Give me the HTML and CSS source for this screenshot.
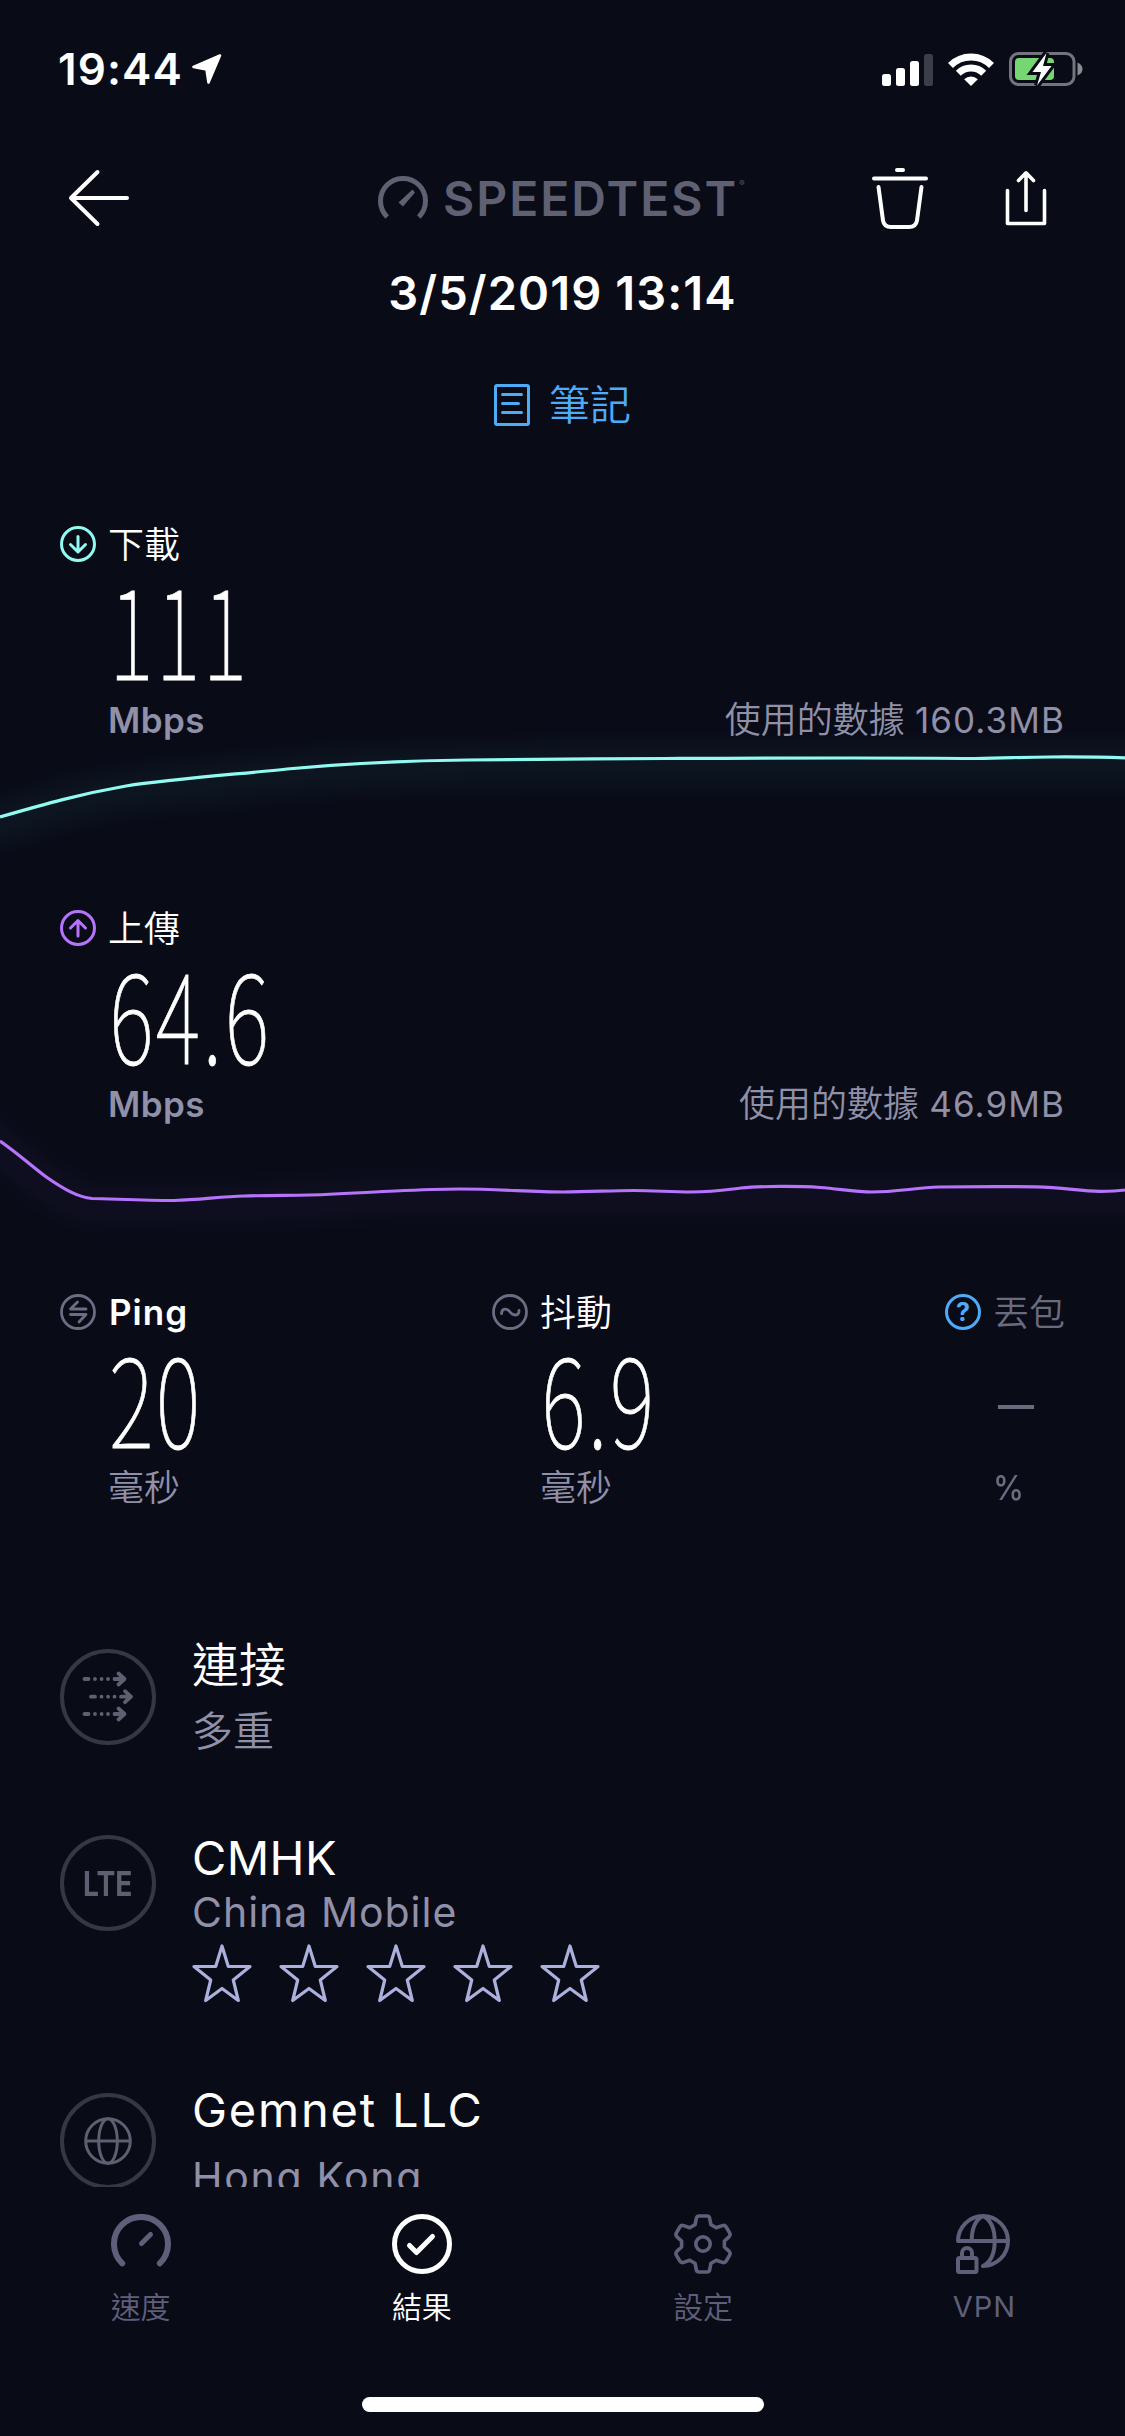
FILE: index.html
```html
<!DOCTYPE html>
<html lang="zh-Hant">
<head>
<meta charset="utf-8">
<title>Speedtest</title>
<link rel="stylesheet" href="styles.css">
</head>
<body>
<div class="screen">
  <main class="content">
    <div class="status">
      <div class="status-left">
        <span class="clock">19:44</span>
        <svg class="loc" width="32" height="32" viewBox="0 0 32 32"><path d="M2.5 14 29 2.5 17.5 29.5 15.5 16.5Z" fill="#fff" stroke="#fff" stroke-width="2.6" stroke-linejoin="round"/></svg>
      </div>
      <div class="status-right">
        <svg width="51" height="33" viewBox="0 0 51 33"><g fill="#fff"><rect y="21" width="9" height="12" rx="2.5"/><rect x="14" y="15" width="9" height="18" rx="2.5"/><rect x="28" y="8" width="9" height="25" rx="2.5"/><rect x="42" y="1" width="9" height="32" rx="2.5" fill="#3c3d48"/></g></svg>
        <svg width="46" height="33" viewBox="0 0 46 33"><g fill="none" stroke="#fff" stroke-width="7"><path d="M2.5 12.5a29 29 0 0 1 41 0"/><path d="M10.3 20.3a18 18 0 0 1 25.4 0"/></g><path d="M23 33l-6.8-6.8a9.8 9.8 0 0 1 13.6 0z" fill="#fff"/></svg>
        <svg width="76" height="36" viewBox="0 0 76 36"><rect x="2.5" y="2.5" width="63.500" height="31" rx="8" fill="none" stroke="#73747d" stroke-width="3"/><path d="M69.500 11.500q5 2 5 6.500t-5 6.500z" fill="#8b8c93"/><rect x="7" y="7" width="39" height="22" rx="4" fill="#76d672"/><path d="M38.500 2 24.500 21h8.500l-4 13.500L43.500 15h-8.500z" fill="#fff" stroke="#090b17" stroke-width="6"/><path d="M38.500 2 24.500 21h8.500l-4 13.500L43.500 15h-8.500z" fill="#fff"/></svg>
      </div>
    </div>

    <header class="nav">
      <svg width="64" height="60" viewBox="0 0 64 60"><path d="M31.500 4 5 30 31.500 56M5 30H61" fill="none" stroke="#fff" stroke-width="4" stroke-linecap="round" stroke-linejoin="round"/></svg>
      <div class="brand">
        <svg width="50" height="50" viewBox="0 0 50 50"><path d="M9.200 41a22.500 22.500 0 1 1 31.600 0" fill="none" stroke="#5f6072" stroke-width="5"/><path d="M34.500 13.500 37 16.500 25 30.500 20.500 26.500Z" fill="#5f6072"/></svg>
        <span class="brand-name">SPEEDTEST</span><span class="reg">®</span>
      </div>
      <svg class="trash" width="60" height="64" viewBox="0 0 60 64"><g fill="none" stroke="#fff" stroke-width="4" stroke-linecap="round"><path d="M27 4h6M4 12.500h52M8.500 21l4.500 33.500q1 6.500 8 6.500h18q7 0 8-6.500l4.500-33.500"/></g></svg>
      <svg class="share" width="44" height="58" viewBox="0 0 44 58"><g fill="none" stroke="#fff" stroke-width="3.600" stroke-linecap="round" stroke-linejoin="round"><path d="M3.500 21.500V54.500H40.500V21.500M22 4V41.500M14.500 11.500 22 3.800l7.500 7.700"/></g></svg>
    </header>

    <h1 class="date">3/5/2019 13:14</h1>
    <a class="note">
      <svg width="36" height="42" viewBox="0 0 36 42"><rect x="1.500" y="1.500" width="33" height="39" rx="1.500" fill="none" stroke="#4dabf7" stroke-width="3"/><path d="M8.500 10.500h19M8.500 19.500h16M8.500 28.500h19" stroke="#4dabf7" stroke-width="3" stroke-linecap="round"/></svg>
      <span>筆記</span>
    </a>

    <section class="result">
      <div class="label"><svg width="36" height="36" viewBox="0 0 36 36"><g fill="none" stroke="#92fbf1" stroke-width="3" stroke-linecap="round" stroke-linejoin="round"><circle cx="18" cy="18" r="16.500"/><path d="M18 10.500v15.500M10.500 18.500 18 26l7.500-7.500"/></g></svg><span>下載</span></div>
      <div class="value"><span>111</span></div>
      <div class="unit"><b>Mbps</b><span>使用的數據 <i>160.3MB</i></span></div>
      <svg class="chart" width="1125" height="128" viewBox="0 738 1125 128"><path class="glow" stroke="#4fc3c9" d="M-40 836 0 824C70 800 110 790 201 784C290 773 370 766 563 764H1165"/><path class="line" stroke="#92fbf1" d="M0 817C45 804 80 794 126 786C170 779 240 774 287 769C350 763 420 760.500 467 760C530 759 600 759 666 758.500C780 758 880 757.500 975 758.500C1010 758 1025 757 1050 757C1085 756.800 1100 757 1125 757.800"/></svg>
    </section>

    <section class="result">
      <div class="label"><svg width="36" height="36" viewBox="0 0 36 36"><g fill="none" stroke="#b574fb" stroke-width="3" stroke-linecap="round" stroke-linejoin="round"><circle cx="18" cy="18" r="16.500"/><path d="M18 26V10.500M10.500 18 18 10.500l7.500 7.500"/></g></svg><span>上傳</span></div>
      <div class="value"><span>64.6</span></div>
      <div class="unit"><b>Mbps</b><span>使用的數據 <i>46.9MB</i></span></div>
      <svg class="chart" width="1125" height="128" viewBox="0 1122 1125 128"><path class="glow" stroke="#7550c0" d="M-40 1110 0 1146C40 1180 65 1204 100 1205C250 1207 330 1196 460 1195S1000 1195 1165 1195"/><path class="line" stroke="#b574fb" d="M0 1141C20 1155 35 1169 47 1177.500C65 1190 78 1197 92 1198.500C115 1199 145 1200.500 174 1200.500C200 1200 220 1196.500 244 1196C270 1195.200 290 1195.500 309 1195C345 1194 370 1192 395 1191C425 1189.500 440 1189 460 1189C500 1189 530 1192 563 1192C590 1192 610 1190.500 634 1190.500C655 1190.500 670 1192 691 1192C715 1192 728 1189.500 741 1188C760 1186 800 1186 820 1187.500C840 1189 855 1192 872 1192C895 1192 915 1188 939 1187C970 1186.500 1010 1186.500 1036 1186.800C1065 1187.500 1080 1191.300 1100 1191.300C1110 1191.300 1118 1191 1125 1190"/></svg>
    </section>

    <section class="metrics">
      <div class="metric">
        <div class="label"><svg width="36" height="36" viewBox="0 0 36 36"><g fill="none" stroke="#6c6c83" stroke-width="2.800" stroke-linecap="round" stroke-linejoin="round"><circle cx="18" cy="18" r="16.500"/><path d="M17.500 8 10.500 15h15.500M10.500 20.500H26L19 28"/></g></svg><b>Ping</b></div>
        <div class="value"><span>20</span></div>
        <div class="unit"><span>毫秒</span></div>
      </div>
      <div class="metric">
        <div class="label"><svg width="36" height="36" viewBox="0 0 36 36"><g fill="none" stroke="#6c6c83" stroke-width="2.800" stroke-linecap="round"><circle cx="18" cy="18" r="16.500"/><path d="M9.500 19.500C10 14 15 14 18 18S27 22.500 27 16.500"/></g></svg><span>抖動</span></div>
        <div class="value"><span>6.9</span></div>
        <div class="unit"><span>毫秒</span></div>
      </div>
      <div class="metric off">
        <div class="label"><span class="help">?</span><span>丟包</span></div>
        <div class="value none"><span class="dash"></span></div>
        <div class="unit"><span class="pct">%</span></div>
      </div>
    </section>

    <section class="details">
      <div class="row connection">
        <div class="badge"><svg width="96" height="96" viewBox="0 0 96 96"><defs><g id="flow"><path d="M24.500 0h4M54.500 0h10M58.500-5.500 64.500 0l-6 5.500"/><path d="M35 0h.01M41.600 0h.01M48 0h.01"/></g></defs><g fill="none" stroke="#5e5f71" stroke-width="3.800" stroke-linecap="round" stroke-linejoin="round"><use href="#flow" y="30"/><use href="#flow" x="6.500" y="47.700"/><use href="#flow" y="65"/></g></svg></div>
        <div class="text"><p class="name">連接</p><p class="sub">多重</p></div>
      </div>
      <div class="row carrier">
        <div class="badge"><span class="lte">LTE</span></div>
        <div class="text"><p class="name n2">CMHK</p><p class="sub s2">China Mobile</p>
          <svg class="stars" width="408" height="60" viewBox="0 0 408 60"><defs><path id="star" d="M30 2 36.300 22.500H58L41.300 36 46.300 56.500 30 44.500 13.700 56.500 18.700 36 2 22.500H23.700Z"/></defs><g fill="none" stroke="#abb0dd" stroke-width="3.200" stroke-linejoin="round"><use href="#star"/><use href="#star" x="87"/><use href="#star" x="174"/><use href="#star" x="261"/><use href="#star" x="348"/></g></svg>
        </div>
      </div>
      <div class="row server">
        <div class="badge"><svg width="96" height="96" viewBox="0 0 96 96"><g fill="none" stroke="#5e5f71" stroke-width="3"><circle cx="48" cy="48" r="22.300"/><ellipse cx="48" cy="48" rx="9.300" ry="22.300"/><path d="M25.700 48h44.600"/></g></svg></div>
        <div class="text"><p class="name n3">Gemnet LLC</p><p class="sub s3">Hong Kong</p></div>
      </div>
    </section>
  </main>

  <nav class="tabs">
    <a class="tab"><svg width="60" height="60" viewBox="0 0 60 60"><g fill="none" stroke="#5f5f7a" stroke-width="6" stroke-linecap="round"><path d="M11.200 49.300a27 27 0 1 1 37.600 0" /><path d="M30.500 29.500 39.500 20.500" stroke-width="5"/></g></svg><span>速度</span></a>
    <a class="tab active"><svg width="60" height="60" viewBox="0 0 60 60"><g fill="none" stroke="#fff" stroke-width="5" stroke-linecap="round" stroke-linejoin="round"><circle cx="30" cy="30" r="27.500"/><path d="M17.500 31.500 24.500 38.500 40.500 22.500"/></g></svg><span>結果</span></a>
    <a class="tab"><svg width="60" height="60" viewBox="0 0 60 60"><g fill="none" stroke="#5f5f7a" stroke-width="3.600" stroke-linejoin="round"><path d="M26 2H34Q36.300 2 36.700 4.300L38 10.800L43.300 13.800L49.300 11.600Q51.800 10.800 53.200 13L56.600 18.800Q57.800 21 56 22.800L51.400 27V33L56 37.200Q57.800 39 56.600 41.200L53.200 47Q51.800 49.200 49.300 48.400L43.300 46.200L38 49.200L36.700 55.700Q36.300 58 34 58H26Q23.700 58 23.300 55.700L22 49.200L16.700 46.200L10.700 48.400Q8.200 49.200 6.800 47L3.400 41.200Q2.200 39 4 37.200L8.600 33V27L4 22.800Q2.200 21 3.400 18.800L6.800 13Q8.200 10.800 10.700 11.600L16.700 13.800L22 10.800L23.300 4.300Q23.700 2 26 2Z"/><circle cx="30" cy="30" r="7.200"/></g></svg><span>設定</span></a>
    <a class="tab"><svg width="60" height="60" viewBox="0 0 60 60"><g fill="none" stroke="#5f5f7a" stroke-width="4" stroke-linecap="round" stroke-linejoin="round"><path d="M29 52A25 25 0 1 0 4 27H54M29 2C21 6 17.700 16 17.700 27M29 2C37 6 40.700 16 40.700 27S37 48 29 52"/><path d="M8 43v-4a5 5 0 0 1 10 0v4"/><rect x="4" y="44" width="18.500" height="14" rx="1.500"/></g></svg><span class="vpn">VPN</span></a>
    <div class="home"></div>
  </nav>
</div>
</body>
</html>
```
FILE: styles.css
```css
* { box-sizing: border-box; margin: 0; padding: 0; }
body { background: #090b17; }
svg { display: block; flex: none; }
.screen {
  width: 1125px;
  height: 2436px;
  overflow: hidden;
  background: #090b17;
  color: #fff;
  font-family: Inter, "Noto Sans CJK TC", sans-serif;
  font-weight: 400;
}
.content { height: 2187px; overflow: hidden; }

.status { height: 138px; padding: 0 41px 0 58px; display: flex; justify-content: space-between; align-items: center; }
.status-left { display: flex; align-items: center; gap: 8px; }
.clock { font-size: 44px; line-height: 50px; font-weight: 600; letter-spacing: 1.1px; }
.status-right { display: flex; align-items: center; gap: 14.5px; }

.nav { height: 120px; padding: 0 75px 0 66px; display: flex; align-items: center; }
.brand { display: flex; align-items: center; margin-left: 248px; width: 370px; padding-top: 6px; color: #5f6072; }
.brand-name { margin: -4px 0 0 15px; font-size: 48px; line-height: 56px; font-weight: 600; letter-spacing: 2px; }
.reg { font-size: 8px; margin: -36px 0 0 1px; }
.trash { margin-left: 122px; }
.share { margin-left: 74px; }

.date { height: 70px; font-size: 47px; line-height: 70px; font-weight: 600; letter-spacing: 1.1px; text-align: center; white-space: nowrap; }
.note { height: 154px; display: flex; justify-content: center; align-items: center; gap: 19px; color: #4dabf7; font-size: 41px; font-weight: 350; font-family: "Noto Sans CJK TC", sans-serif; }
.note span { line-height: 60px; margin-top: -7px; }

.result { height: 384px; padding-top: 44px; }
.label { height: 36px; display: flex; align-items: center; gap: 12px; font-size: 36px; line-height: 36px; white-space: nowrap; }
.result .label { padding-left: 60px; }
.label > span { font-family: "Noto Sans CJK TC", sans-serif; font-weight: 350; margin-top: -4px; }
.label b { font-size: 35px; font-weight: 600; letter-spacing: 1px; margin-left: 1px; }
.value { height: 90px; margin-top: 30px; padding-left: 49px; }
.result .value { padding-left: 109px; }
.value span { display: inline-block; font: 100 122px/90px "Noto Sans CJK TC", sans-serif; letter-spacing: 3.2px; -webkit-text-stroke: .8px currentColor; margin-top: -10px; transform: scaleX(.7); transform-origin: 0 50%; white-space: nowrap; }
.unit { height: 36px; margin-top: 20px; padding-left: 48px; display: flex; justify-content: space-between; align-items: center; color: #9090a8; font-size: 36px; line-height: 36px; font-weight: 350; white-space: nowrap; }
.result .unit { padding: 0 60px 0 108px; }
.unit b { font-size: 35px; font-weight: 600; letter-spacing: .4px; }
.unit i { font-style: normal; font-size: 35px; font-weight: 400; letter-spacing: 1.1px; }
.chart { overflow: visible; }
.chart path { fill: none; }
.line { stroke-width: 3.2; }
.chart .glow { stroke-width: 40; opacity: .06; filter: blur(12px); }

.metrics { height: 256px; padding: 44px 61px 0 60px; display: grid; grid-template-columns: 432px 453px auto; }
.off, .off .unit { color: #6b6b80; }
.label .help { width: 36px; height: 36px; margin: 0; border: 3px solid #4dabf7; border-radius: 50%; color: #4dabf7; font: 700 25px/30px Inter, sans-serif; text-align: center; }
.value .dash { display: block; width: 36px; height: 4px; margin: 0; background: #6b6b80; transform: none; }
.value.none { padding: 45px 0 0 53px; }
.unit .pct { font-size: 34px; font-weight: 500; transform: scaleX(.92); transform-origin: 0 50%; }

.details { padding: 143px 60px 0; }
.row { display: flex; gap: 36px; }
.connection { height: 186px; }
.carrier { height: 258px; }
.badge { flex: none; width: 96px; height: 96px; border: 4.5px solid #363744; border-radius: 50%; display: flex; justify-content: center; align-items: center; }
.lte { color: #5e5f71; font-size: 34px; font-weight: 700; transform: scaleX(.83); }
.name { font-size: 47px; line-height: 60px; height: 60px; font-weight: 350; margin-top: -14px; white-space: nowrap; }
.sub { font-size: 41px; line-height: 50px; height: 50px; color: #9090a8; font-weight: 350; margin-top: 11px; white-space: nowrap; }
.n2, .n3, .s2, .s3 { font-weight: 400; }
.n2 { margin-top: -7px; letter-spacing: .4px; }
.s2 { margin-top: -1px; letter-spacing: 1px; }
.stars { margin: 7px 0 0; }
.n3 { margin-top: -13px; letter-spacing: 1.8px; }
.s3 { margin-top: 12px; letter-spacing: 1.7px; }

.tabs { height: 249px; padding-top: 27px; display: grid; grid-template: 60px 123px 15px / repeat(4, 1fr); }
.tab { grid-row: 1 / 3; display: flex; flex-direction: column; align-items: center; color: #5f5f7a; font-size: 30px; font-weight: 350; }
.tab span { margin-top: 13px; line-height: 36px; height: 36px; font-family: "Noto Sans CJK TC", sans-serif; }
.tab .vpn { margin-top: 15px; font: 400 29px/36px Inter, sans-serif; letter-spacing: 1px; }
.active { color: #fff; }
.home { grid-area: 3 / 1 / 4 / 5; width: 402px; height: 15px; border-radius: 8px; background: #fff; margin: 0 auto; }
```
